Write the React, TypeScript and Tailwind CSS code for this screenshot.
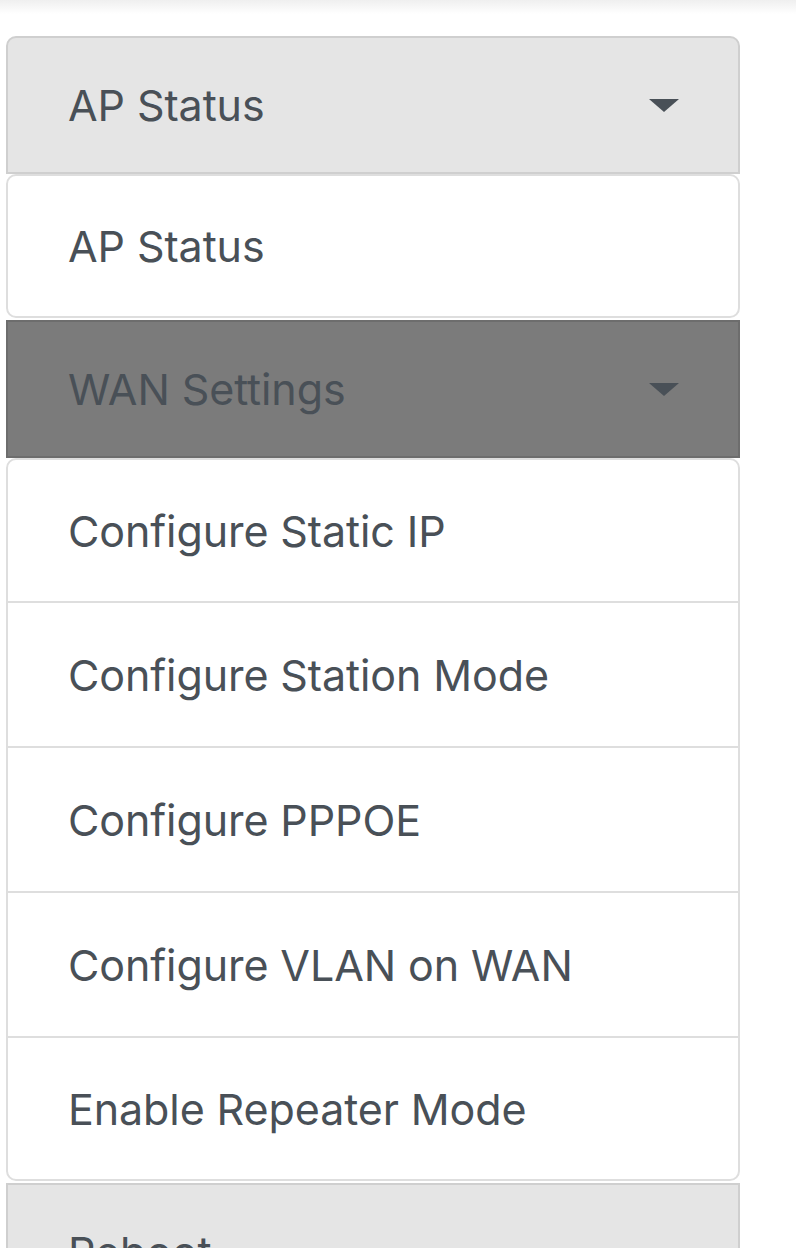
import React from 'react';

type Section = {
  title: string;
  dark?: boolean;
  items: string[];
};

const sections: Section[] = [
  { title: 'AP Status', items: ['AP Status'] },
  {
    title: 'WAN Settings',
    dark: true,
    items: [
      'Configure Static IP',
      'Configure Station Mode',
      'Configure PPPOE',
      'Configure VLAN on WAN',
      'Enable Repeater Mode',
    ],
  },
  { title: 'Reboot', items: [] },
];

function Caret() {
  return (
    <span className="w-0 h-0 border-l-[15px] border-r-[15px] border-t-[13px] border-l-transparent border-r-transparent border-t-[#495057]" />
  );
}

function itemHeight(count: number, j: number) {
  if (count === 1) return 'h-[140px]';
  if (j === 0) return 'h-[141px]';
  if (j === count - 1) return 'h-[143px] border-t-2 border-[#dedede]';
  return 'h-[145px] border-t-2 border-[#dedede]';
}

export default function App() {
  return (
    <div className="w-[796px] h-[1248px] overflow-hidden bg-white text-[#495057] font-['Inter','Liberation_Sans',sans-serif] text-[43px] leading-[60px] tracking-[-0.1px]">
      {/* faint shadow under the top bar */}
      <div className="h-[14px] bg-gradient-to-b from-[#efefef] to-white" />

      <div className="ml-[6px] w-[734px] mt-[22px] flex flex-col">
        {sections.map((s, i) => (
          <div key={s.title} className={i > 0 ? 'mt-[2px]' : ''}>
            {/* Section header with dropdown caret */}
            <div
              className={
                s.dark
                  ? 'h-[138px] flex items-center justify-between pl-[60px] pr-[59px] bg-[#7b7b7b] border-2 border-[#6d6d6d]'
                  : 'h-[138px] flex items-center justify-between pl-[60px] pr-[59px] bg-[#e5e5e5] border-2 border-[#cfcfcf] ' +
                    (i === 0 ? 'rounded-t-[10px]' : '')
              }
            >
              <span>{s.title}</span>
              {s.items.length > 0 && <Caret />}
            </div>

            {s.items.length > 0 && (
              <ul className="border-2 border-[#dedede] rounded-[10px] bg-white">
                {s.items.map((item, j) => (
                  <li key={item} className={'flex items-center pl-[60px] ' + itemHeight(s.items.length, j)}>
                    {item}
                  </li>
                ))}
              </ul>
            )}
          </div>
        ))}
      </div>
    </div>
  );
}
